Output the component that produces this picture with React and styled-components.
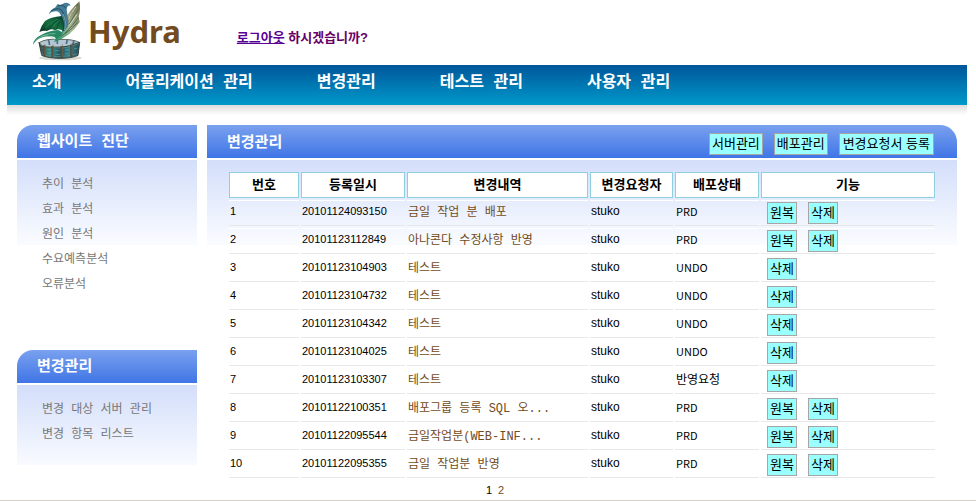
import React from "react";
import styled, { createGlobalStyle } from "styled-components";

const GlobalStyle = createGlobalStyle`
  * { box-sizing: border-box; }
  body {
    margin: 0;
    background: #fff;
    color: #000;
    font: 12px/16px "Liberation Mono", "Noto Sans CJK KR", sans-serif;
  }
  a { text-decoration: none; color: inherit; }
  ul { margin: 0; padding: 0; list-style: none; }
  h1, h2 { margin: 0; }
`;

const Page = styled.div`
  padding: 0 9px 0 7px;
  border-bottom: 1px solid #d4d0c8;
  overflow: hidden;
`;

const Header = styled.header`
  display: flex;
  align-items: flex-start;
  height: 65px;
  padding-left: 22px;
`;

const Logo = styled.svg`
  width: 56px;
  height: 65px;
  flex: none;
`;

const Brand = styled.h1`
  padding-left: 3px;
  color: #734b21;
  font: bold 31px/62px "Noto Sans", "Open Sans", sans-serif;
`;

const Logout = styled.p`
  margin: 28px 0 0 56px;
  color: #660066;
  font: bold 13px/20px "Liberation Sans", "Noto Sans CJK KR", sans-serif;
  a { color: #5a0096; text-decoration: underline; }
`;

const Nav = styled.nav`
  display: flex;
  gap: 64px;
  height: 40px;
  padding-left: 25px;
  background: linear-gradient(#00569a, #0099ca);
  color: #fff;
  font-size: 16px;
  font-weight: bold;
  line-height: 36px;
  white-space: nowrap;
`;

const NavShadow = styled.div`
  height: 10px;
  margin-bottom: 10px;
  background: linear-gradient(#dcdcdc, #fff);
`;

const Columns = styled.div`
  display: grid;
  grid-template-columns: 180px 1fr;
  gap: 10px;
  padding: 0 10px;
`;

const Sidebar = styled.aside`
  display: flex;
  flex-direction: column;
  gap: 52px;
`;

const PanelTitle = styled.div`
  display: flex;
  align-items: center;
  justify-content: space-between;
  height: 33px;
  margin-bottom: 2px;
  padding: ${(p) => (p.$main ? "5px" : "3px")} 23px 0 20px;
  border-radius: ${(p) => (p.$main ? "0 17px 0 0" : "16px 0 0 0")};
  background: linear-gradient(#7aa1ef, #4075e6);
  color: #fff;
  h2 { font-size: 15px; line-height: 28px; }
`;

const PanelBody = styled.div`
  background: linear-gradient(#d3defa, #fafcff) no-repeat 0 0 / 100% 85px;
`;

const Menu = styled.ul`
  padding: 13px 0 0 25px;
  padding-bottom: ${(p) => (p.$closed ? "17px" : "0")};
  color: #777;
  line-height: 25px;
`;

const Actions = styled.div`
  display: flex;
  gap: 11px;
`;

const RowActions = styled.div`
  display: flex;
  gap: 11px;
  padding-left: 5px;
`;

const Button = styled.button`
  height: 22px;
  padding: 0 ${(p) => (p.$wide ? "3px" : "2px")};
  border: 1px solid #a6a6a6;
  background: #99ffff;
  color: #000;
  font: 13px/18px "Liberation Sans", "Noto Sans CJK KR", sans-serif;
  white-space: nowrap;
`;

const TableArea = styled.div`
  padding: 10px 20px 0;
`;

const Table = styled.table`
  width: 100%;
  table-layout: fixed;
  border-spacing: 2px;
`;

const HeadCell = styled.th`
  width: ${(p) => (p.$width ? `${p.$width}px` : "auto")};
  height: 26px;
  padding: 0 0 3px;
  border: 1px solid #8fd0e0;
  background: #fff;
  font: bold 13px/20px "Noto Sans CJK KR", sans-serif;
`;

const Cell = styled.td`
  height: 26px;
  padding: 1px;
  border-top: 1px solid #fff;
  border-bottom: 1px solid #e8e8e8;
  vertical-align: top;
  line-height: 22px;
  white-space: nowrap;
`;

const Value = styled(Cell)`
  font-size: ${(p) => (p.$person ? "12px" : "11px")};
  line-height: 18px;
  font-family: "Liberation Sans", "Noto Sans CJK KR", sans-serif;
`;

const Status = styled(Cell)`
  font-size: ${(p) => (p.$korean ? "12px" : "11px")};
  line-height: 18px;
  font-family: "Liberation Sans Narrow", "Noto Sans CJK KR", sans-serif;
`;

const Subject = styled.a`
  color: #734b21;
`;

const Pager = styled.nav`
  display: flex;
  justify-content: center;
  gap: 6px;
  margin-right: 174px;
  font: 11px/20px "Liberation Sans", sans-serif;
`;

const NAV = ["소개", "어플리케이션 관리", "변경관리", "테스트 관리", "사용자 관리"];
const ANALYSIS = ["추이 분석", "효과 분석", "원인 분석", "수요예측분석", "오류분석"];
const CHANGES = ["변경 대상 서버 관리", "변경 항목 리스트"];
const COLUMNS = [
  ["번호", 70], ["등록일시", 104], ["변경내역", 0],
  ["변경요청자", 83], ["배포상태", 84], ["기능", 174],
];
const ROWS = [
  ["20101124093150", "금일 작업 분 배포", "PRD", true],
  ["20101123112849", "아나콘다 수정사항 반영", "PRD", true],
  ["20101123104903", "테스트", "UNDO", false],
  ["20101123104732", "테스트", "UNDO", false],
  ["20101123104342", "테스트", "UNDO", false],
  ["20101123104025", "테스트", "UNDO", false],
  ["20101123103307", "테스트", "반영요청", false],
  ["20101122100351", "배포그룹 등록 SQL 오...", "PRD", true],
  ["20101122095544", "금일작업분(WEB-INF...", "PRD", true],
  ["20101122095355", "금일 작업분 반영", "PRD", true],
];

function Dragon() {
  return (
    <Logo viewBox="24 0 168 195" aria-hidden="true">
      <defs>
        <linearGradient id="wing" x1="0" y1="1" x2="1" y2="0">
          <stop offset="0" stopColor="#0b3423" />
          <stop offset=".5" stopColor="#157041" />
          <stop offset="1" stopColor="#0e4233" />
        </linearGradient>
        <linearGradient id="farWing" x1="0" y1="1" x2="1" y2="0">
          <stop offset="0" stopColor="#2b9a6d" />
          <stop offset=".45" stopColor="#a9b796" />
          <stop offset="1" stopColor="#6d6a4c" />
        </linearGradient>
        <linearGradient id="tower">
          <stop offset="0" stopColor="#3c4b43" />
          <stop offset=".3" stopColor="#3b918f" />
          <stop offset=".5" stopColor="#24535c" />
          <stop offset=".75" stopColor="#34808c" />
          <stop offset="1" stopColor="#214c59" />
        </linearGradient>
      </defs>
      <ellipse cx="118" cy="174" rx="64" ry="7" fill="#d9d9d3" />
      <path d="M55 128Q72 116 112 118Q158 117 176 128L169 141H61Z" fill="#b3c6d4" stroke="#5b6660" strokeWidth="3" />
      <path d="M82 119l4 16M109 117v15M139 118l-3 14M159 121l-4 15" stroke="#536d7f" strokeWidth="5" />
      <path d="M36 134Q38 116 59 106Q86 91 111 90L135 102Q121 122 98 126Q114 112 91 109Q63 108 47 121Q39 128 36 134Z" fill="#278765" />
      <path d="M44 122Q68 99 103 101M64 108Q91 105 102 121" fill="none" stroke="#91c7a6" strokeWidth="2" />
      <path d="M175 4Q180 26 173 51L176 66Q163 87 145 102Q124 118 104 120Q132 103 127 82L132 60Q141 36 175 4Z" fill="url(#farWing)" />
      <path d="M171 12Q149 38 138 68M172 28Q155 54 139 82M173 52Q153 80 132 99M170 67Q151 91 119 110" fill="none" stroke="#4b6e50" strokeWidth="3" />
      <path d="M165 20Q148 41 142 59M168 43Q149 72 141 79" fill="none" stroke="#e0d8bb" strokeWidth="3" />
      <path d="M83 43Q88 28 102 23L110 12L118 15L132 8Q145 7 149 17Q138 14 137 29Q140 50 143 70Q137 91 123 98Q125 73 121 51Q117 34 105 34Q92 33 83 43Z" fill="#457d96" />
      <path d="M91 33Q106 22 120 29Q133 40 131 77M111 18Q129 12 134 25" fill="none" stroke="#244c65" strokeWidth="3" />
      <path d="M126 42Q137 61 130 90" fill="none" stroke="#78a4ab" strokeWidth="3" />
      <path d="M122 48Q88 51 72 63Q61 76 55 96Q68 90 78 93Q90 84 102 91Q113 83 128 94Q135 77 122 48Z" fill="url(#wing)" />
      <path d="M121 50Q90 62 63 91M120 54Q95 67 81 91M121 55Q112 69 105 89M122 51Q129 72 128 92" fill="none" stroke="#083e2c" strokeWidth="2" />
      <path d="M112 57Q86 66 73 84M118 60Q104 67 95 82" fill="none" stroke="#248555" strokeWidth="3" />
      <path d="M54 127L61 138Q112 153 176 127L171 166Q153 175 115 175Q79 174 62 166Z" fill="url(#tower)" stroke="#34413b" strokeWidth="3" />
      <path d="M57 133Q73 142 91 142M99 143Q132 146 147 139M154 137L176 130M61 162Q102 178 170 162" fill="none" stroke="#6c9288" strokeWidth="2" />
      <path d="M70 136v31M94 138v34M122 138v36M151 134v36" stroke="#4d4b3c" strokeWidth="6" />
      <path d="M72 133v32M96 134v34M124 133v36M153 130v35" stroke="#7b6b50" strokeWidth="2" />
      <path d="M79 148h10M102 152h14M132 150h13M159 146h9M79 159h12M103 163h15M132 161h11" stroke="#5aaeae" strokeWidth="2" />
    </Logo>
  );
}

function SideMenu({ title, items, closed }) {
  return (
    <section>
      <PanelTitle><h2>{title}</h2></PanelTitle>
      <PanelBody>
        <Menu $closed={closed}>
          {items.map((item) => <li key={item}><a href="#">{item}</a></li>)}
        </Menu>
      </PanelBody>
    </section>
  );
}

export default function App() {
  return (
    <>
      <GlobalStyle />
      <Page>
        <Header>
          <Dragon />
          <Brand>Hydra</Brand>
          <Logout><a href="#">로그아웃</a> 하시겠습니까?</Logout>
        </Header>
        <Nav>
          {NAV.map((item) => <a href="#" key={item}>{item}</a>)}
        </Nav>
        <NavShadow />
        <Columns>
          <Sidebar>
            <SideMenu title="웹사이트 진단" items={ANALYSIS} />
            <SideMenu title="변경관리" items={CHANGES} closed />
          </Sidebar>
          <main>
            <PanelTitle $main>
              <h2>변경관리</h2>
              <Actions>
                <Button>서버관리</Button>
                <Button>배포관리</Button>
                <Button $wide>변경요청서 등록</Button>
              </Actions>
            </PanelTitle>
            <PanelBody>
              <TableArea>
                <Table>
                  <thead>
                    <tr>
                      {COLUMNS.map(([name, width]) => (
                        <HeadCell key={name} $width={width} scope="col">{name}</HeadCell>
                      ))}
                    </tr>
                  </thead>
                  <tbody>
                    {ROWS.map(([date, subject, status, restorable], i) => (
                      <tr key={date}>
                        <Value>{i + 1}</Value>
                        <Value>{date}</Value>
                        <Cell><Subject href="#">{subject}</Subject></Cell>
                        <Value $person>stuko</Value>
                        <Status $korean={status === "반영요청"}>{status}</Status>
                        <Cell>
                          <RowActions>
                            {restorable && <Button>원복</Button>}
                            <Button>삭제</Button>
                          </RowActions>
                        </Cell>
                      </tr>
                    ))}
                  </tbody>
                </Table>
                <Pager aria-label="페이지">
                  <span aria-current="page">1</span>
                  <Subject href="#">2</Subject>
                </Pager>
              </TableArea>
            </PanelBody>
          </main>
        </Columns>
      </Page>
    </>
  );
}
